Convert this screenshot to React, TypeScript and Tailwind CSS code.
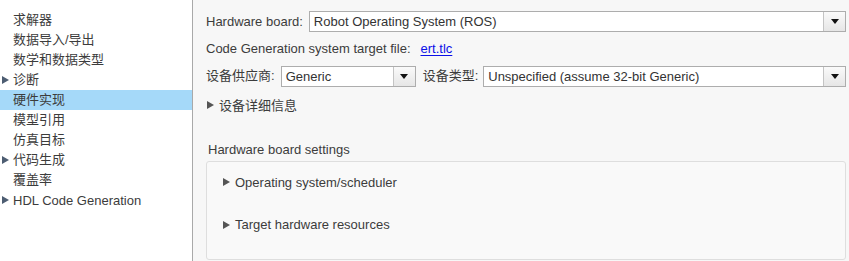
import React from 'react';

const cjk = "font-['Liberation_Sans','Noto_Sans_CJK_SC',sans-serif]";

const navItems: { label: string; arrow?: boolean; active?: boolean }[] = [
  { label: '求解器' },
  { label: '数据导入/导出' },
  { label: '数学和数据类型' },
  { label: '诊断', arrow: true },
  { label: '硬件实现', active: true },
  { label: '模型引用' },
  { label: '仿真目标' },
  { label: '代码生成', arrow: true },
  { label: '覆盖率' },
  { label: 'HDL Code Generation', arrow: true },
];

function Caret({ className = '' }: { className?: string }) {
  return (
    <svg width="7" height="8" viewBox="0 0 7 8" className={className}>
      <path d="M0 0 L7 4 L0 8 Z" fill="currentColor" />
    </svg>
  );
}

function Select({ value, className = '' }: { value: string; className?: string }) {
  return (
    <div className={`flex h-[21px] border border-[#adadad] bg-white ${className}`}>
      <div className="flex-1 truncate pl-[4px] leading-[19px] text-[13px] text-[#333]">{value}</div>
      <div className="flex w-[22px] items-center justify-center border-l border-[#c4c4c4] bg-gradient-to-b from-[#fafafa] to-[#e6e6e6]">
        <svg width="8" height="5" viewBox="0 0 8 5">
          <path d="M0 0 L8 0 L4 5 Z" fill="#111" />
        </svg>
      </div>
    </div>
  );
}

export default function App() {
  return (
    <div className={`flex h-[261px] w-[849px] overflow-hidden bg-[#f7f7f7] text-[13px] text-[#3c3c3c] ${cjk}`}>
      {/* Left tree */}
      <div className="w-[193px] shrink-0 border-r border-[#a9a9a9] bg-white pt-[10px]">
        {navItems.map((item) => (
          <div
            key={item.label}
            className={`relative flex h-[20px] items-center pl-[13px] ${item.active ? 'bg-[#a5d9f9]' : ''}`}
          >
            {item.arrow && <Caret className="absolute left-[2px] top-[6px] text-[#4d5d72]" />}
            <span className={item.label.startsWith('HDL') ? 'pt-[2px]' : ''}>{item.label}</span>
          </div>
        ))}
      </div>

      {/* Right panel */}
      <div className="flex flex-1 flex-col pl-[13px] pr-[3px] pt-[11px]">
        <div className="flex items-center">
          <span className="mr-[6px]">Hardware board:</span>
          <Select value="Robot Operating System (ROS)" className="flex-1" />
        </div>

        <div className="mt-[7px] flex items-center">
          <span>Code Generation system target file:</span>
          <a className="ml-[10px] text-[#0b10e8] underline underline-offset-2">ert.tlc</a>
        </div>

        <div className="mt-[7px] flex items-center">
          <span className="mr-[6px]">设备供应商:</span>
          <Select value="Generic" className="w-[135px]" />
          <span className="ml-[7px] mr-[5px]">设备类型:</span>
          <Select value="Unspecified (assume 32-bit Generic)" className="flex-1" />
        </div>

        <div className="mt-[9px] flex items-center">
          <Caret className="ml-[1px] mr-[5px] text-[#555]" />
          <span>设备详细信息</span>
        </div>

        <div className="mt-[25px] pl-[2px]">Hardware board settings</div>
        <div className="mt-[1px] flex h-[99px] flex-col rounded-[3px] border border-[#dedede] bg-[#f9f9f9] pl-[16px]">
          <div className="mt-[11px] flex items-center">
            <Caret className="mr-[5px] text-[#555]" />
            <span>Operating system/scheduler</span>
          </div>
          <div className="mt-[23px] flex items-center">
            <Caret className="mr-[5px] text-[#555]" />
            <span>Target hardware resources</span>
          </div>
        </div>
      </div>
    </div>
  );
}
